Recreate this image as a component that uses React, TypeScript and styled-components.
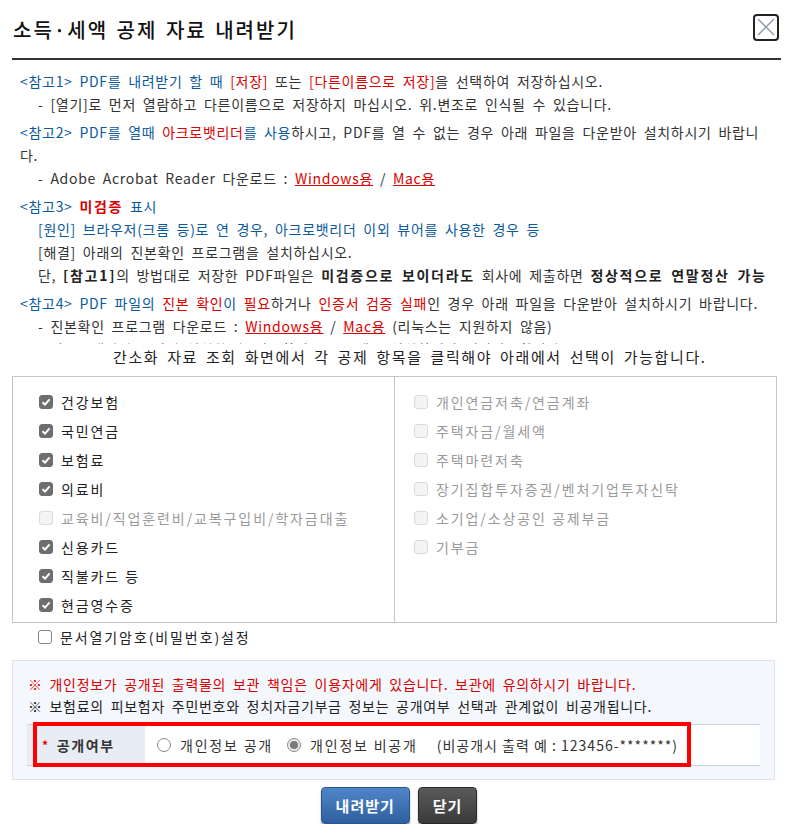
import React, {useState} from 'react';
import {styled, createGlobalStyle} from "styled-components";

const GlobalStyle = createGlobalStyle`
  body {
    margin: 0;
    background: #fff;
    font-family: "Noto Sans CJK KR", "Noto Sans", sans-serif;
    color: #333;
  }
`

const Dialog = styled.div`
  width: 789px;
  box-sizing: border-box;
  padding: 0 8px 0 12px;
`
const Header = styled.div`
  height: 58px;
  display: flex;
  align-items: center;
  justify-content: space-between;
  border-bottom: 2px solid #333;
`
const Title = styled.h1`
  margin: 0 0 0 1px;
  font-size: 20px;
  font-weight: 500;
  letter-spacing: 2px;
  word-spacing: 2px;
  color: #111;
`
const CloseButton = styled.button`
  width: 26px;
  height: 27px;
  margin: 0 2px 4px 0;
  padding: 0;
  border: 2px solid #222;
  border-radius: 4px;
  background: #fff;
  display: flex;
  align-items: center;
  justify-content: center;
`

const Notice = styled.div`
  height: 284px;
  overflow: hidden;
  padding: 10px 14px 0 8px;
  box-sizing: border-box;
  font-size: 14px;
  line-height: 23px;
  letter-spacing: 0.7px;
  word-spacing: 3px;
  color: #333;
`
const Group = styled.div`
  & + & {
    margin-top: 5px;
  }
`
const Line = styled.div<{$indent?: boolean}>`
  padding-left: ${p => p.$indent ? '18px' : '0'};
`
const Blue = styled.span`
  color: #0b5a9c;
`
const Red = styled.span<{$bold?: boolean}>`
  color: #d80000;
  font-weight: ${p => p.$bold ? 700 : 400};
  letter-spacing: ${p => p.$bold ? '1.7px' : 'inherit'};
`
const Strong = styled.b`
  color: #222;
  letter-spacing: 1.7px;
`
const Link = styled.a`
  color: #d80000;
  text-decoration: underline;
`

const Hint = styled.p`
  margin: 2px 0 0;
  padding-left: 101px;
  font-size: 15px;
  line-height: 22px;
  letter-spacing: 1.6px;
  word-spacing: 3px;
  color: #222;
`

const Panel = styled.div`
  margin: 8px 4px 0 0;
  height: 247px;
  box-sizing: border-box;
  border: 1px solid #c4c4c4;
  display: grid;
  grid-template-columns: 381px 1fr;
`
const Column = styled.div<{$left: number}>`
  padding: 10px 0 0 ${p => p.$left}px;
  & + & {
    border-left: 1px solid #c4c4c4;
  }
`
const CheckRow = styled.label<{$disabled?: boolean}>`
  height: 29px;
  display: flex;
  align-items: center;
  gap: 8px;
  font-size: 14px;
  letter-spacing: 1.9px;
  color: ${p => p.$disabled ? '#9a9a9a' : '#222'};
`
const Box = styled.span<{$state: 'on' | 'off' | 'plain'}>`
  width: 14px;
  height: 14px;
  box-sizing: border-box;
  border-radius: 3px;
  display: flex;
  align-items: center;
  justify-content: center;
  flex: none;
  background: ${p => p.$state === 'on' ? '#6e6e6e' : p.$state === 'off' ? '#f4f4f4' : '#fff'};
  border: 1px solid ${p => p.$state === 'on' ? '#6e6e6e' : p.$state === 'off' ? '#dadada' : '#858585'};
`
const PasswordRow = styled(CheckRow)`
  padding-left: 26px;
  height: 28px;
`

const InfoBox = styled.div`
  margin: 9px 6px 0 0;
  padding: 12px 14px 13px 14px;
  background: #f4f7fb;
  border: 1px solid #dde3ec;
  font-size: 14px;
  line-height: 22px;
  letter-spacing: 0.7px;
  word-spacing: 3px;
`
const InfoLine = styled.div<{$red?: boolean}>`
  padding-left: 1px;
  color: ${p => p.$red ? '#d80000' : '#222'};
`
const OptionRow = styled.div`
  position: relative;
  margin-top: 7px;
  height: 40px;
  display: flex;
  border-top: 1px solid #c8d2de;
  border-bottom: 1px solid #c8d2de;
  background: #fff;
  word-spacing: 0;
`
const OptionLabel = styled.div`
  width: 118px;
  flex: none;
  background: #e8edf5;
  display: flex;
  align-items: center;
  padding-left: 15px;
  box-sizing: border-box;
  font-size: 14px;
  font-weight: 700;
  letter-spacing: 1.6px;
  color: #333;
`
const Star = styled.span`
  color: #e00000;
  font-size: 12px;
  margin-right: 7px;
`
const Options = styled.div`
  display: flex;
  align-items: center;
  padding-left: 12px;
  font-size: 14px;
  letter-spacing: 1.8px;
  color: #333;
`
const RadioLabel = styled.label`
  display: flex;
  align-items: center;
  gap: 9px;
  margin-right: 14px;
`
const Circle = styled.span<{$checked?: boolean}>`
  width: 14px;
  height: 14px;
  box-sizing: border-box;
  border-radius: 50%;
  border: 1px solid #8a8a8a;
  background: ${p => p.$checked ? '#eaeaea' : '#fff'};
  display: flex;
  align-items: center;
  justify-content: center;
  &::after {
    content: "";
    width: 8px;
    height: 8px;
    border-radius: 50%;
    background: ${p => p.$checked ? '#7a7a7a' : 'transparent'};
  }
`
const Example = styled.span`
  margin-left: 10px;
  letter-spacing: 1px;
`
const Highlight = styled.div`
  position: absolute;
  left: 6px;
  top: -3px;
  width: 658px;
  height: 45px;
  box-sizing: border-box;
  border: 4px solid #ff0000;
  pointer-events: none;
`

const Buttons = styled.div`
  margin-top: 7px;
  display: flex;
  justify-content: center;
  gap: 8px;
  padding-left: 5px;
`
const Button = styled.button<{$dark?: boolean}>`
  height: 37px;
  padding: 0 14px;
  border-radius: 4px;
  border: 1px solid ${p => p.$dark ? '#2a2a2a' : '#2a5690'};
  background: ${p => p.$dark
    ? 'linear-gradient(#5a5a5a, #3a3a3a)'
    : 'linear-gradient(#4f86c9, #2f5f9f)'};
  box-shadow: 0 2px 2px rgba(0, 0, 0, 0.35);
  color: #fff;
  font-family: inherit;
  font-size: 15px;
  font-weight: 700;
  letter-spacing: 1px;
`

const Check = () => (
    <svg width="10" height="10" viewBox="0 0 10 10">
        <path d="M1.5 5.2 L4 7.6 L8.6 2.4" fill="none" stroke="#fff" strokeWidth="2"/>
    </svg>
)

type Item = { name: string, checked: boolean, disabled?: boolean }

const leftItems: Item[] = [
    {name: '건강보험', checked: true},
    {name: '국민연금', checked: true},
    {name: '보험료', checked: true},
    {name: '의료비', checked: true},
    {name: '교육비/직업훈련비/교복구입비/학자금대출', checked: false, disabled: true},
    {name: '신용카드', checked: true},
    {name: '직불카드 등', checked: true},
    {name: '현금영수증', checked: true},
]
const rightItems: Item[] = [
    {name: '개인연금저축/연금계좌', checked: false, disabled: true},
    {name: '주택자금/월세액', checked: false, disabled: true},
    {name: '주택마련저축', checked: false, disabled: true},
    {name: '장기집합투자증권/벤처기업투자신탁', checked: false, disabled: true},
    {name: '소기업/소상공인 공제부금', checked: false, disabled: true},
    {name: '기부금', checked: false, disabled: true},
]

const CheckList = ({items}: { items: Item[] }) => (
    <>
        {items.map(item => (
            <CheckRow key={item.name} $disabled={item.disabled}>
                <Box $state={item.checked ? 'on' : 'off'}>{item.checked && <Check/>}</Box>
                {item.name}
            </CheckRow>
        ))}
    </>
)

const App: React.FC = () => {
    const [isPublic, setIsPublic] = useState(false)

    return (
        <Dialog>
            <GlobalStyle/>
            <Header>
                <Title>소득·세액 공제 자료 내려받기</Title>
                <CloseButton aria-label="닫기">
                    <svg width="20" height="20" viewBox="0 0 20 20">
                        <path d="M2 2 L18 18 M18 2 L2 18" stroke="#8a93aa" strokeWidth="1.3"/>
                    </svg>
                </CloseButton>
            </Header>

            <Notice>
                <Group>
                    <Line>
                        <Blue>&lt;참고1&gt; PDF를 내려받기 할 때 </Blue><Red>[저장]</Red> 또는 <Red>[다른이름으로 저장]</Red>을 선택하여 저장하십시오.
                    </Line>
                    <Line $indent>- [열기]로 먼저 열람하고 다른이름으로 저장하지 마십시오. 위.변조로 인식될 수 있습니다.</Line>
                </Group>
                <Group>
                    <Line>
                        <Blue>&lt;참고2&gt; PDF를 열때 </Blue><Red>아크로뱃리더</Red><Blue>를 사용</Blue>하시고, PDF를 열 수 없는 경우 아래 파일을 다운받아 설치하시기 바랍니다.
                    </Line>
                    <Line $indent>- Adobe Acrobat Reader 다운로드 : <Link>Windows용</Link> / <Link>Mac용</Link></Line>
                </Group>
                <Group>
                    <Line>
                        <Blue>&lt;참고3&gt; </Blue><Red $bold>미검증</Red><Blue> 표시</Blue>
                    </Line>
                    <Line $indent><Blue>[원인] 브라우저(크롬 등)로 연 경우, 아크로뱃리더 이외 뷰어를 사용한 경우 등</Blue></Line>
                    <Line $indent>[해결] 아래의 진본확인 프로그램을 설치하십시오.</Line>
                    <Line $indent>
                        단, <Strong>[참고1]</Strong>의 방법대로 저장한 PDF파일은 <Strong>미검증으로 보이더라도</Strong> 회사에 제출하면 <Strong>정상적으로 연말정산 가능</Strong>
                    </Line>
                </Group>
                <Group>
                    <Line>
                        <Blue>&lt;참고4&gt; PDF 파일의 </Blue><Red>진본 확인</Red><Blue>이 </Blue><Red>필요</Red>하거나 <Red>인증서 검증 실패</Red>인 경우 아래 파일을 다운받아 설치하시기 바랍니다.
                    </Line>
                    <Line $indent>- 진본확인 프로그램 다운로드 : <Link>Windows용</Link> / <Link>Mac용</Link> (리눅스는 지원하지 않음)</Line>
                    <Line $indent>
                        <Blue>- 아크로뱃리더를 </Blue><Red>먼저</Red><Blue> 설치한 후 진본확인 프로그램을 설치하여야 정상작동합니다.</Blue>
                    </Line>
                </Group>
            </Notice>

            <Hint>간소화 자료 조회 화면에서 각 공제 항목을 클릭해야 아래에서 선택이 가능합니다.</Hint>

            <Panel>
                <Column $left={26}><CheckList items={leftItems}/></Column>
                <Column $left={19}><CheckList items={rightItems}/></Column>
            </Panel>

            <PasswordRow>
                <Box $state="plain"/>
                문서열기암호(비밀번호)설정
            </PasswordRow>

            <InfoBox>
                <InfoLine $red>※ 개인정보가 공개된 출력물의 보관 책임은 이용자에게 있습니다. 보관에 유의하시기 바랍니다.</InfoLine>
                <InfoLine>※ 보험료의 피보험자 주민번호와 정치자금기부금 정보는 공개여부 선택과 관계없이 비공개됩니다.</InfoLine>
                <OptionRow>
                    <OptionLabel><Star>*</Star>공개여부</OptionLabel>
                    <Options>
                        <RadioLabel onClick={() => setIsPublic(true)}>
                            <Circle $checked={isPublic}/>개인정보 공개
                        </RadioLabel>
                        <RadioLabel onClick={() => setIsPublic(false)}>
                            <Circle $checked={!isPublic}/>개인정보 비공개
                            <Example>(비공개시 출력 예 : 123456-*******)</Example>
                        </RadioLabel>
                    </Options>
                    <Highlight/>
                </OptionRow>
            </InfoBox>

            <Buttons>
                <Button>내려받기</Button>
                <Button $dark>닫기</Button>
            </Buttons>
        </Dialog>
    )
}
export default App;
